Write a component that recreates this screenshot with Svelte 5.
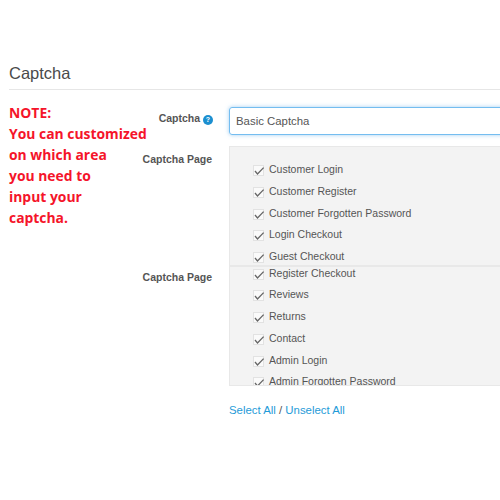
<script>
    const firstPages = ["Customer Login", "Customer Register", "Customer Forgotten Password", "Login Checkout", "Guest Checkout"];
    const secondPages = ["Register Checkout", "Reviews", "Returns", "Contact", "Admin Login", "Admin Forgotten Password"];
</script>

<div class="page">
    <h2>Captcha</h2>
    <div class="body">
        <p class="note">NOTE:<br />You can customized<br />on which area<br />you need to<br />input your<br />captcha.</p>
        <div class="form">
            <div class="row first">
                <span class="label">Captcha <span class="help">?</span></span>
                <div class="input">Basic Captcha</div>
            </div>
            <div class="row">
                <span class="label page-label one-label">Captcha Page</span>
                <div class="panel one">
                    {#each firstPages as name}
                        <div class="check">
                            <svg viewBox="0 0 11 11" width="11" height="11"><rect x="0.5" y="0.5" width="10" height="10" fill="#fafafa" stroke="#e2e2e2" /><path d="M2 6l2.5 3L10.6 2.6" fill="none" stroke="#666" stroke-width="1.3" /></svg>
                            {name}
                        </div>
                    {/each}
                </div>
            </div>
            <div class="row">
                <span class="label page-label">Captcha Page</span>
                <div class="panel two">
                    {#each secondPages as name}
                        <div class="check">
                            <svg viewBox="0 0 11 11" width="11" height="11"><rect x="0.5" y="0.5" width="10" height="10" fill="#fafafa" stroke="#e2e2e2" /><path d="M2 6l2.5 3L10.6 2.6" fill="none" stroke="#666" stroke-width="1.3" /></svg>
                            {name}
                        </div>
                    {/each}
                </div>
            </div>
            <div class="links"><span class="link">Select All</span> / <span class="link">Unselect All</span></div>
        </div>
    </div>
</div>

<style>
    :global(body) {
        background: #fff;
        overflow: hidden;
    }
    .page {
        width: 500px;
        height: 500px;
        overflow: hidden;
        padding: 64px 0 0 9px;
        box-sizing: border-box;
        font-family: "Liberation Sans", Arial, sans-serif;
        color: #555;
    }
    h2 {
        margin: 0;
        height: 25px;
        border-bottom: 1px solid #e6e6e6;
        font-size: 16.5px;
        line-height: 18px;
        font-weight: 400;
        color: #4a4a4a;
    }
    .body {
        display: flex;
    }
    .note {
        flex: none;
        width: 140px;
        margin: 12px 0 0;
        font-family: "Open Sans", sans-serif;
        font-size: 13.9px;
        line-height: 21px;
        font-weight: 700;
        white-space: nowrap;
        color: #f5142a;
    }
    .form {
        flex: none;
        width: 351px;
        padding-top: 17px;
    }
    .row {
        display: flex;
    }
    .first {
        margin-bottom: 11px;
    }
    .label {
        flex: none;
        width: 64px;
        margin-right: 16px;
        text-align: right;
        white-space: nowrap;
        font-size: 10.5px;
        font-weight: 700;
        line-height: 13px;
        padding-top: 5px;
    }
    .page-label {
        padding-top: 5px;
        margin-left: -7px;
        margin-right: 17px;
        width: 70px;
    }
    .one-label {
        padding-top: 7px;
    }
    .help {
        display: inline-block;
        width: 10px;
        height: 10px;
        margin-left: 0;
        border-radius: 50%;
        background: #1b8fd0;
        color: #fff;
        font-size: 7px;
        line-height: 10px;
        text-align: center;
    }
    .input {
        flex: none;
        width: 280px;
        height: 28px;
        box-sizing: border-box;
        padding-left: 6px;
        border: 1px solid #74bdf0;
        border-radius: 3px;
        box-shadow: 0 0 4px rgba(102, 175, 233, 0.6);
        font-size: 11.4px;
        line-height: 26px;
        color: #555;
    }
    .panel {
        flex: none;
        width: 280px;
        height: 120px;
        box-sizing: border-box;
        overflow: hidden;
        background: #f3f3f3;
        border: 1px solid #e8e8e8;
        padding-left: 23px;
    }
    .one {
        padding-top: 15px;
    }
    .two .check:first-child {
        margin-top: -1.5px;
    }
    .check {
        display: flex;
        align-items: flex-start;
        gap: 5px;
        height: 21.8px;
        font-size: 10.5px;
        line-height: 15px;
        white-space: nowrap;
    }
    .check svg {
        flex: none;
        margin-top: 3px;
        overflow: visible;
    }
    .links {
        margin: 17px 0 0 80px;
        font-size: 11.4px;
        line-height: 14px;
    }
    .link {
        color: #1f9bd8;
    }
</style>
